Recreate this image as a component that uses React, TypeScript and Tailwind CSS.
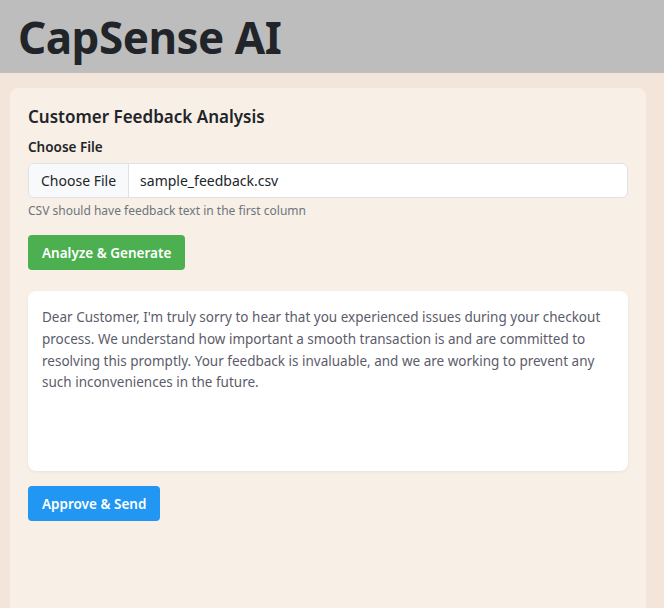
export default function App() {
  return (
    <div className="min-h-[608px] bg-[#f3e5da] text-[#212529]" style={{ fontFamily: '"Noto Sans", "Open Sans", sans-serif' }}>
      <header className="h-[73px] bg-[#bdbdbd] px-[18px] flex items-center">
        <h1 className="text-[44px] font-bold leading-none tracking-[-0.5px] text-[#212529]">CapSense AI</h1>
      </header>
      <main className="pl-[10px] pr-[18px] pt-[15px]">
        <div className="bg-[#f8efe6] rounded-[8px] px-[18px] pt-[18px] pb-[100px]">
          <h2 className="text-[17px] font-semibold leading-[22px] mb-[9px]">Customer Feedback Analysis</h2>
          <label className="block text-[13.5px] font-semibold mb-[6px]">Choose File</label>
          <div className="flex h-[35px] rounded-[6px] border border-[#dee2e6] bg-white overflow-hidden">
            <span className="flex items-center px-[12px] bg-[#f8f9fa] border-r border-[#dee2e6] text-[14px]">Choose File</span>
            <span className="flex items-center px-[11px] text-[14px]">sample_feedback.csv</span>
          </div>
          <p className="text-[12px] text-[#6c757d] mt-[4px] mb-[15px]">CSV should have feedback text in the first column</p>
          <button className="bg-[#4caf50] text-white text-[13.5px] font-semibold rounded-[4px] px-[14px] h-[35px]">Analyze &amp; Generate</button>
          <div className="mt-[21px] bg-white rounded-[8px] shadow-[0_1px_3px_rgba(0,0,0,0.06)] h-[180px] px-[14px] pt-[16px] text-[13.5px] leading-[21.7px] text-[#5c5c6a]">
            Dear Customer, I'm truly sorry to hear that you experienced issues during your checkout process. We understand how important a smooth transaction is and are committed to resolving this promptly. Your feedback is invaluable, and we are working to prevent any such inconveniences in the future.
          </div>
          <button className="mt-[15px] bg-[#2196f3] text-white text-[13.5px] font-semibold rounded-[4px] px-[14px] h-[35px]">Approve &amp; Send</button>
        </div>
      </main>
    </div>
  );
}
